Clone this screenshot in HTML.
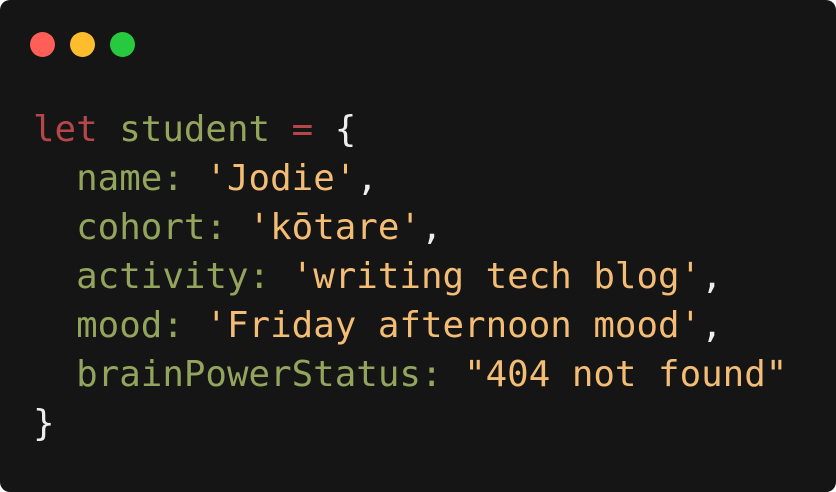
<!DOCTYPE html>
<html><head><style>
html,body{margin:0;padding:0;background:#fff;width:836px;height:492px;overflow:hidden}
.box{position:absolute;left:0;top:0;width:836px;height:492px;background:#151515;border-radius:10px}
.d{position:absolute;top:32px;width:25px;height:25px;border-radius:50%}
pre{position:absolute;left:33px;top:105px;margin:0;font-family:"DejaVu Sans Mono","Liberation Mono",monospace;font-size:35.8px;line-height:49px;color:#eeeeee}
.k{color:#b5474b}.g{color:#93a55c}.s{color:#f4bd75}
</style></head><body>
<div class="box">
<div class="d" style="left:30px;background:#ff5f56"></div>
<div class="d" style="left:70px;background:#ffbd2e"></div>
<div class="d" style="left:110px;background:#27c93f"></div>
<pre><span class="k">let</span> <span class="g">student</span> <span class="k">=</span> {
  <span class="g">name:</span> <span class="s">'Jodie'</span>,
  <span class="g">cohort:</span> <span class="s">'kōtare'</span>,
  <span class="g">activity:</span> <span class="s">'writing tech blog'</span>,
  <span class="g">mood:</span> <span class="s">'Friday afternoon mood'</span>,
  <span class="g">brainPowerStatus:</span> <span class="s">"404 not found"</span>
}</pre>
</div>
</body></html>
